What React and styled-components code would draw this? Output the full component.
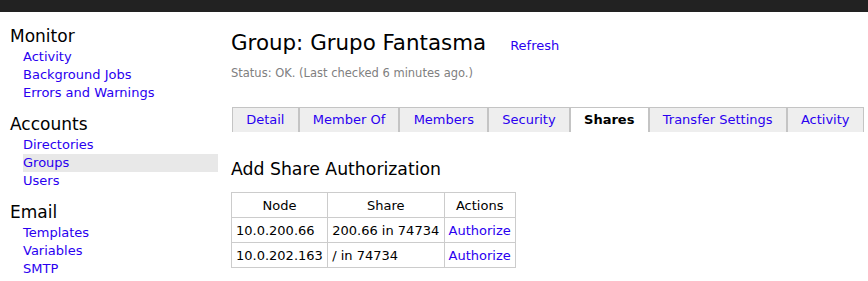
import React from "react";
import styled, { createGlobalStyle } from "styled-components";

const Global = createGlobalStyle`
  html, body { margin: 0; padding: 0; background: #fff; }
  body { font-family: Verdana, "DejaVu Sans", sans-serif; font-size: 13px; color: #000; }
  a { color: #2a00f0; text-decoration: none; }
`;

const TopBar = styled.div`
  height: 12px;
  background: #222;
`;

const Layout = styled.div`
  display: flex;
`;

const Sidebar = styled.nav`
  width: 218px;
  flex: none;
  padding-top: 13px;
`;

const Section = styled.div`
  margin-bottom: 11px;
`;

const SectionTitle = styled.div`
  font-size: 17px;
  line-height: 23px;
  padding-left: 10px;
`;

const NavLink = styled.a`
  display: block;
  margin-left: 23px;
  line-height: 18px;
  font-size: 13px;
  background: ${(p) => (p.$active ? "#e8e8e8" : "transparent")};
`;

const Main = styled.main`
  flex: 1;
  padding-left: 13px;
  padding-top: 18px;
`;

const TitleRow = styled.div`
  display: flex;
  align-items: baseline;
  gap: 24px;
`;

const Title = styled.h1`
  margin: 0;
  font-size: 21.4px;
  font-weight: normal;
  line-height: 26px;
`;

const Status = styled.div`
  font-size: 11.5px;
  color: #808080;
  margin-top: 10px;
`;

const Tabs = styled.div`
  display: flex;
  margin-top: 27px;
  margin-left: 1px;
`;

const Tab = styled.a`
  display: block;
  padding: 0 13.2px;
  line-height: 24px;
  border: 1px solid #c4c4c4;
  border-bottom: none;
  background: ${(p) => (p.$active ? "#fff" : "#eee")};
  color: ${(p) => (p.$active ? "#000" : "#2a00f0")};
  font-weight: ${(p) => (p.$active ? "bold" : "normal")};
`;

const SubTitle = styled.h2`
  margin: 26px 0 0;
  font-size: 17.3px;
  font-weight: normal;
  line-height: 22px;
`;

const Table = styled.table`
  margin-top: 12px;
  border-collapse: collapse;
  font-size: 13px;
`;

const Th = styled.th`
  border: 1px solid #ccc;
  font-weight: normal;
  padding: 3px 4.4px 3px 4px;
  height: 18px;
`;

const Td = styled.td`
  border: 1px solid #ccc;
  padding: 3px 4.4px 3px 4px;
  height: 18px;
`;

const nav = [
  { title: "Monitor", items: ["Activity", "Background Jobs", "Errors and Warnings"] },
  { title: "Accounts", items: ["Directories", "Groups", "Users"] },
  { title: "Email", items: ["Templates", "Variables", "SMTP"] },
];

const tabs = ["Detail", "Member Of", "Members", "Security", "Shares", "Transfer Settings", "Activity"];

const rows = [
  ["10.0.200.66", "200.66 in 74734"],
  ["10.0.202.163", "/ in 74734"],
];

export default function App() {
  return (
    <>
      <Global />
      <TopBar />
      <Layout>
        <Sidebar>
          {nav.map((s) => (
            <Section key={s.title}>
              <SectionTitle>{s.title}</SectionTitle>
              {s.items.map((i) => (
                <NavLink key={i} href="#" $active={i === "Groups"}>
                  {i}
                </NavLink>
              ))}
            </Section>
          ))}
        </Sidebar>
        <Main>
          <TitleRow>
            <Title>Group: Grupo Fantasma</Title>
            <a href="#">Refresh</a>
          </TitleRow>
          <Status>Status: OK. (Last checked 6 minutes ago.)</Status>
          <Tabs>
            {tabs.map((t) => (
              <Tab key={t} href="#" $active={t === "Shares"}>
                {t}
              </Tab>
            ))}
          </Tabs>
          <SubTitle>Add Share Authorization</SubTitle>
          <Table>
            <thead>
              <tr>
                <Th>Node</Th>
                <Th>Share</Th>
                <Th>Actions</Th>
              </tr>
            </thead>
            <tbody>
              {rows.map((r) => (
                <tr key={r[0]}>
                  <Td>{r[0]}</Td>
                  <Td>{r[1]}</Td>
                  <Td>
                    <a href="#">Authorize</a>
                  </Td>
                </tr>
              ))}
            </tbody>
          </Table>
        </Main>
      </Layout>
    </>
  );
}
